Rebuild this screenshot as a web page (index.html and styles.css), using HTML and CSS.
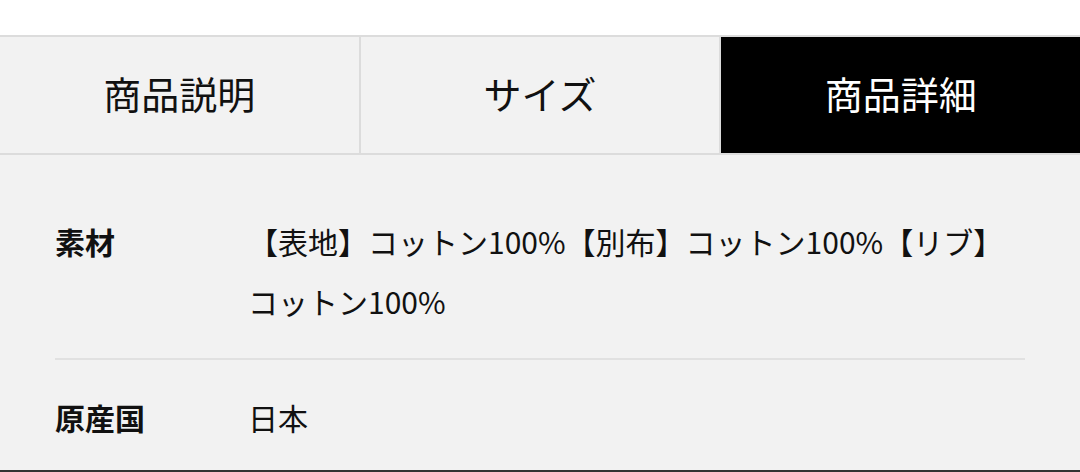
FILE: index.html
```html
<!DOCTYPE html>
<html lang="ja">
<head>
  <meta charset="UTF-8">
  <meta name="viewport" content="width=device-width, initial-scale=1.0">
  <title>商品詳細</title>
  <link rel="stylesheet" href="styles.css">
</head>
<body>
  <div class="top"></div>
  <div class="tabs">
    <div class="tab">商品説明</div>
    <div class="tab">サイズ</div>
    <div class="tab active">商品詳細</div>
  </div>
  <div class="details">
    <div class="row">
      <div class="label">素材</div>
      <div class="value">【表地】コットン100%【別布】コットン100%【リブ】コットン100%</div>
    </div>
    <div class="row last">
      <div class="label">原産国</div>
      <div class="value">日本</div>
    </div>
  </div>
  <div class="bottom"></div>
</body>
</html>
```

FILE: styles.css
```css
*{
  margin: 0;
  padding: 0;
  box-sizing: border-box;
  font-family: "Noto Sans CJK JP", "Noto Sans", sans-serif;
}
html, body {
  height: 472px;
  overflow: hidden;
}
body {
  display: flex;
  flex-direction: column;
  background-color: #f2f2f2;
  color: #111;
}
.top {
  height: 35px;
  flex-shrink: 0;
  background: #fff;
}
.tabs {
  flex-shrink: 0;
  display: grid;
  grid-template-columns: 1fr 1fr 1fr;
  gap: 2px;
  background: #dcdcdc;
  border-top: 2px solid #dcdcdc;
  border-bottom: 2px solid #dcdcdc;
}
.tab {
  height: 116px;
  padding-bottom: 6px;
  display: flex;
  justify-content: center;
  align-items: center;
  background: #f2f2f2;
  font-size: 38px;
}
.tab.active {
  background: #000;
  color: #fff;
}
.details {
  flex: 1;
  min-height: 0;
  overflow: hidden;
  padding: 29px 55px 0;
}
.row {
  display: flex;
  padding: 27px 0;
  border-bottom: 2px solid #e1e1e1;
  font-size: 30px;
  line-height: 60px;
}
.row.last {
  border-bottom: none;
  padding-bottom: 0;
}
.label {
  width: 193px;
  flex-shrink: 0;
  font-weight: bold;
}
.value {
  flex: 1;
}
.bottom {
  flex-shrink: 0;
  height: 2px;
  background: #333;
}
```
